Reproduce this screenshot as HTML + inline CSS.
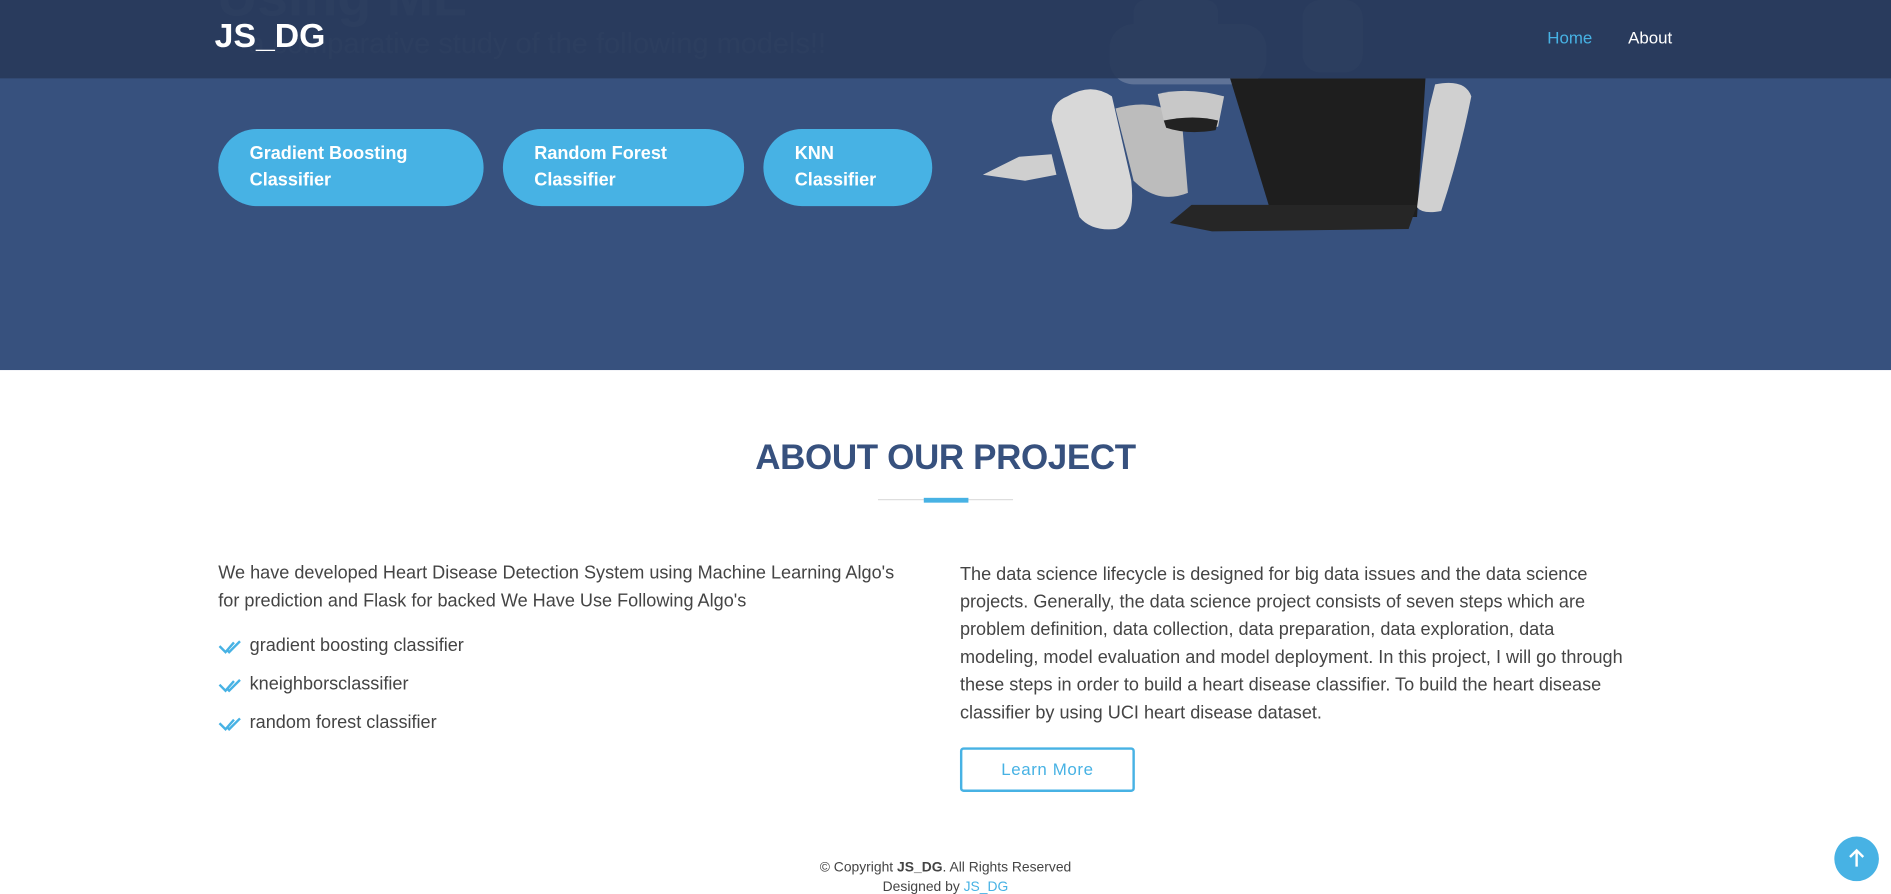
<!DOCTYPE html>
<html><head><meta charset="utf-8"><style>
html,body{margin:0;padding:0;width:1891px;height:892px;overflow:hidden;background:#fff;}
#w{position:absolute;left:0;top:0;width:1568px;height:740px;transform:scale(1.20599,1.2054);transform-origin:0 0;font-family:"Liberation Sans",sans-serif;}
.a{position:absolute;}
.hero{left:0;top:0;width:1568px;height:307px;background:#37517e;overflow:hidden;}
.hdr{left:0;top:0;width:1568px;height:65px;background:rgba(40,58,90,.92);}
.btn{top:107px;height:64px;border-radius:32px;background:#47b2e4;color:#fff;font-weight:bold;font-size:15px;line-height:22px;box-sizing:border-box;padding:10px 0 0 26px;}
.p{color:#444;font-size:15px;line-height:23px;}
.li{left:181px;color:#444;font-size:15px;}
.li svg{position:absolute;left:0;top:4px;}
.li span{position:absolute;left:26px;top:1px;white-space:nowrap;}
</style></head><body><div id="w">
<div class="a hero">
 <div class="a" style="left:180px;top:-30px;font-size:46px;font-weight:bold;color:#5a709a;">Using ML</div>
 <div class="a" style="left:206px;top:23px;font-size:24px;color:#5a709a;white-space:nowrap;">a comparative study of the following models!!</div>
 <svg class="a" style="left:810px;top:0" width="420" height="200" viewBox="0 0 420 200">
  <g opacity=".6" fill="#7a8aa8"><rect x="130" y="0" width="70" height="40" rx="10"/><rect x="110" y="20" width="130" height="50" rx="20"/><rect x="270" y="0" width="50" height="60" rx="15"/></g>
  <path d="M75 80 Q95 68 112 80 L128 150 Q132 185 115 190 Q95 192 85 180 L62 100 Q62 85 75 80Z" fill="#d8d8d8"/>
  <path d="M115 90 Q150 80 170 100 L175 160 Q150 170 130 150Z" fill="#bcbcbc"/>
  <path d="M5 145 L35 130 L62 128 L66 145 L40 150Z" fill="#cfcfcf"/>
  <path d="M150 78 Q175 72 205 80 L200 105 Q175 110 155 100Z" fill="#c8c8c8"/>
  <path d="M155 100 Q180 95 200 100 L198 108 Q175 112 157 106Z" fill="#222"/>
  <path d="M210 65 L372 65 L365 180 L245 180Z" fill="#1e1e1e"/>
  <path d="M160 185 L178 170 L365 170 L358 190 L195 192Z" fill="#262626"/>
  <path d="M380 70 Q405 65 410 80 Q400 130 385 175 Q370 178 365 172 L375 90Z" fill="#d0d0d0"/>
 </svg>
</div>
<div class="a hdr"></div>
<div class="a" style="left:178px;top:14px;font-size:28px;font-weight:bold;color:#fff;">JS_DG</div>
<div class="a" style="left:1283px;top:23px;font-size:14px;color:#47b2e4;">Home</div>
<div class="a" style="left:1350px;top:23px;font-size:14px;color:#fff;">About</div>
<div class="a btn" style="left:181px;width:220px;">Gradient Boosting<br>Classifier</div>
<div class="a btn" style="left:417px;width:200px;">Random Forest<br>Classifier</div>
<div class="a btn" style="left:633px;width:140px;">KNN<br>Classifier</div>

<div class="a" style="left:0;width:1568px;top:364px;text-align:center;font-size:29px;font-weight:bold;color:#37517e;letter-spacing:-0.3px;">ABOUT OUR PROJECT</div>
<div class="a" style="left:728px;top:414px;width:112px;height:1px;background:#ddd;"></div>
<div class="a" style="left:766px;top:413px;width:37px;height:4px;background:#47b2e4;"></div>

<div class="a p" style="left:181px;top:464px;width:578px;">We have developed Heart Disease Detection System using Machine Learning Algo's for prediction and Flask for backed We Have Use Following Algo's</div>
<div class="a li" style="top:526px;"><svg width="20" height="14" viewBox="0 0 20 14"><path d="M1 6 L6 11 L13 3 M8 10 L9 11 L18 2" stroke="#47b2e4" stroke-width="2" fill="none"/></svg><span>gradient boosting classifier</span></div>
<div class="a li" style="top:558px;"><svg width="20" height="14" viewBox="0 0 20 14"><path d="M1 6 L6 11 L13 3 M8 10 L9 11 L18 2" stroke="#47b2e4" stroke-width="2" fill="none"/></svg><span>kneighborsclassifier</span></div>
<div class="a li" style="top:590px;"><svg width="20" height="14" viewBox="0 0 20 14"><path d="M1 6 L6 11 L13 3 M8 10 L9 11 L18 2" stroke="#47b2e4" stroke-width="2" fill="none"/></svg><span>random forest classifier</span></div>

<div class="a p" style="left:796px;top:465px;width:620px;white-space:nowrap;">The data science lifecycle is designed for big data issues and the data science<br>projects. Generally, the data science project consists of seven steps which are<br>problem definition, data collection, data preparation, data exploration, data<br>modeling, model evaluation and model deployment. In this project, I will go through<br>these steps in order to build a heart disease classifier. To build the heart disease<br>classifier by using UCI heart disease dataset.</div>
<div class="a" style="left:796px;top:620px;width:145px;height:37px;border:2px solid #47b2e4;border-radius:3px;box-sizing:border-box;color:#47b2e4;font-size:14px;text-align:center;line-height:33px;letter-spacing:.5px;">Learn More</div>

<div class="a" style="left:0;width:1568px;top:714px;text-align:center;font-size:11.5px;color:#444;">© Copyright <b>JS_DG</b>. All Rights Reserved</div>
<div class="a" style="left:0;width:1568px;top:730px;text-align:center;font-size:11.5px;color:#444;">Designed by <span style="color:#47b2e4">JS_DG</span></div>
<div class="a" style="left:1521px;top:694px;width:37px;height:37px;border-radius:50%;background:#47b2e4;"><svg width="37" height="37" viewBox="0 0 37 37"><path d="M18.5 25 V12 M13 17 L18.5 11.5 L24 17" stroke="#fff" stroke-width="2" fill="none"/></svg></div>
</div></body></html>
